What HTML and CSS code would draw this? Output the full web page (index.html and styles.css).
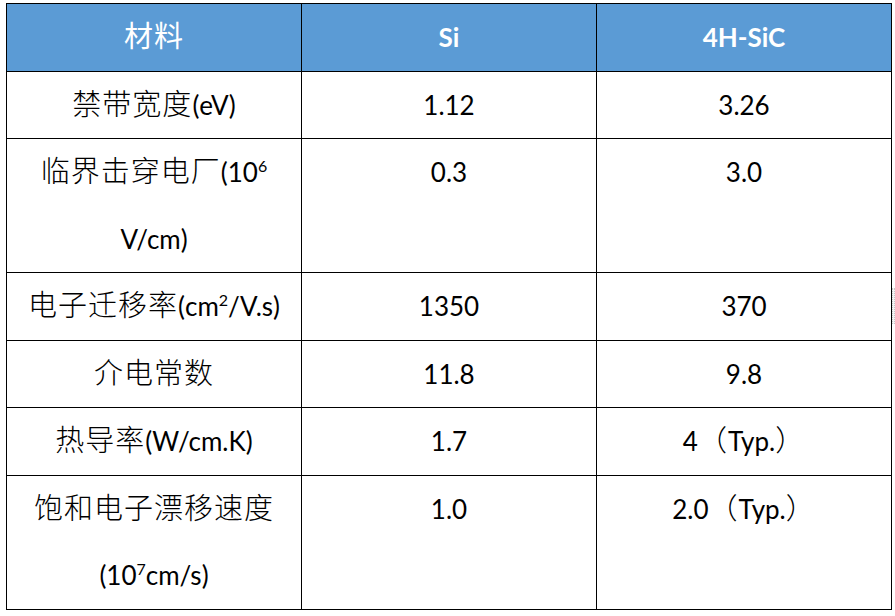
FILE: index.html
```html
<!DOCTYPE html>
<html lang="zh-CN">

<head>
    <meta charset="UTF-8">
    <meta name="viewport" content="width=device-width, initial-scale=1.0">
    <title>Si 与 4H-SiC 材料参数对比</title>
    <link rel="stylesheet" href="styles.css">
</head>

<body>
    <div class="table-wrap">
        <table class="spec-table">
            <thead>
                <tr>
                    <th><span class="zh">材料</span></th>
                    <th>Si</th>
                    <th>4H-SiC</th>
                </tr>
            </thead>
            <tbody>
                <tr>
                    <td><span class="zh">禁带宽度</span>(eV)</td>
                    <td>1.12</td>
                    <td>3.26</td>
                </tr>
                <tr>
                    <td><span class="zh">临界击穿电厂</span>(10<sup>6</sup><br>V/cm)</td>
                    <td>0.3</td>
                    <td>3.0</td>
                </tr>
                <tr>
                    <td><span class="zh">电子迁移率</span>(cm<sup>2</sup>/V.s)</td>
                    <td>1350</td>
                    <td>370</td>
                </tr>
                <tr>
                    <td><span class="zh">介电常数</span></td>
                    <td>11.8</td>
                    <td>9.8</td>
                </tr>
                <tr>
                    <td><span class="zh">热导率</span>(W/cm.K)</td>
                    <td>1.7</td>
                    <td>4<span class="zh">（</span>Typ.<span class="zh">）</span></td>
                </tr>
                <tr>
                    <td><span class="zh">饱和电子漂移速度</span><br>(10<sup>7</sup>cm/s)</td>
                    <td>1.0</td>
                    <td>2.0<span class="zh">（</span>Typ.<span class="zh">）</span></td>
                </tr>
            </tbody>
        </table>

        <!-- Word 表格缩放手柄 -->
        <span class="handle handle-right"></span>
        <span class="handle handle-bottom"></span>
    </div>
</body>

</html>
```

FILE: styles.css
```css
body {
    margin: 0;
    background-color: #fff;
    font-family: Lato, "Noto Sans CJK SC", sans-serif;
    color: #000;
}

.table-wrap {
    position: relative;
    padding: 3px 0 0 6px;
    width: 887px;
}

.spec-table {
    border-collapse: collapse;
    table-layout: fixed;
    width: 886px;
}

.spec-table th,
.spec-table td {
    border: 1px solid #000;
    padding: 0 6px;
    text-align: center;
    vertical-align: top;
    font-size: 26px;
    line-height: 66.5px;
    white-space: nowrap;
}

.spec-table th {
    background-color: #5b9bd5;
    color: #fff;
    font-weight: bold;
}

.zh {
    font-family: "Noto Sans CJK SC", sans-serif;
    font-size: 29px;
    font-weight: 300;
    line-height: 1;
    letter-spacing: 1px;
}

.spec-table th .zh {
    font-weight: normal;
}

sup {
    font-size: 16px;
    line-height: 0;
    vertical-align: 10px;
}

.handle {
    position: absolute;
    border: 1px dotted #c8c8c8;
    background-color: #f4f4f4;
}

.handle-right {
    left: 892px;
    top: 288px;
    width: 1px;
    height: 34px;
}

.handle-bottom {
    left: 430px;
    top: 612px;
    width: 34px;
    height: 1px;
}
```
